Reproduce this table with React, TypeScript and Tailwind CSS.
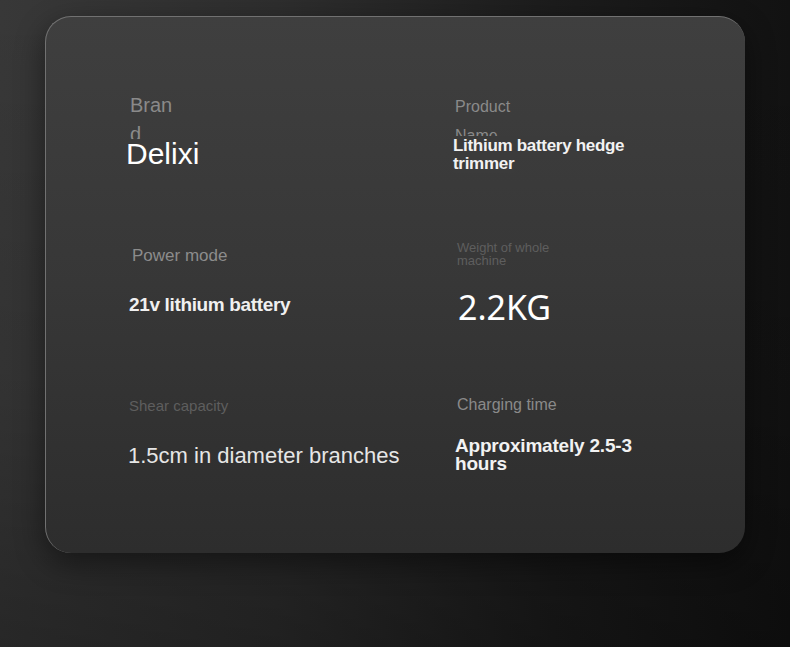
import React from "react";

const sans = { fontFamily: '"Liberation Sans", Arial, sans-serif' };

export default function App() {
  return (
    <div
      className="w-[790px] h-[647px] overflow-hidden pt-[16px] pl-[45px] bg-[linear-gradient(180deg,rgba(0,0,0,0)_0%,rgba(0,0,0,0.1)_60%,rgba(0,0,0,0.3)_100%),linear-gradient(90deg,#383838_0%,#2e2e2e_35%,#1c1c1c_70%,#121212_100%)]"
      style={sans}
    >
      <div className="w-[700px] h-[537px] rounded-[26px] border-t border-l border-[#717171] bg-[linear-gradient(180deg,#3f3f3f_0%,#373737_50%,#2d2d2d_100%)] shadow-[0_10px_30px_rgba(0,0,0,0.45)] pt-[73px] pl-[81px] grid grid-cols-[327px_1fr] grid-rows-[150px_150px_150px]">
        {/* Brand */}
        <div className="pt-[1px]">
          <div className="ml-[3px] w-[46px] break-all text-[20px] leading-[29px] text-[#8a8a8a]">
            Brand
          </div>
          <div className="-mt-[10px] -ml-[1px] relative w-fit bg-[#3b3b3b] text-[30px] leading-[30px] text-white">
            Delixi
          </div>
        </div>
        {/* Product Name */}
        <div className="pt-[2px]">
          <div className="ml-[1px] w-[70px] text-[16px] leading-[29px] text-[#8a8a8a]">
            Product Name
          </div>
          <div className="-mt-[13px] -ml-[1px] relative w-[190px] text-[17px] leading-[18px] font-bold tracking-[-0.3px] text-[#f2f2f2]">
            <span className="bg-[#3b3b3b]">Lithium battery hedge trimmer</span>
          </div>
        </div>
        {/* Power mode */}
        <div className="pt-[6px]">
          <div className="ml-[5px] text-[17px] leading-[20px] text-[#8c8c8c]">
            Power mode
          </div>
          <div className="mt-[28px] ml-[2px] text-[19px] leading-[22px] font-bold tracking-[-0.35px] text-[#f0f0f0]">
            21v lithium battery
          </div>
        </div>
        {/* Weight */}
        <div className="pt-[1px]">
          <div className="ml-[3px] w-[110px] text-[13px] leading-[13px] text-[#5e5e5e]">
            Weight of whole machine
          </div>
          <div
            className="mt-[20px] ml-[4px] text-[34px] leading-[40px] text-white"
            style={{ fontFamily: '"Noto Sans", "Open Sans", sans-serif' }}
          >
            2.2KG
          </div>
        </div>
        {/* Shear capacity */}
        <div className="pt-[7px]">
          <div className="ml-[2px] text-[15px] leading-[18px] text-[#5e5e5e]">
            Shear capacity
          </div>
          <div className="mt-[28px] ml-[1px] text-[22px] leading-[26px] text-[#e6e6e6]">
            1.5cm in diameter branches
          </div>
        </div>
        {/* Charging time */}
        <div className="pt-[6px]">
          <div className="ml-[3px] text-[16px] leading-[18px] text-[#8a8a8a]">
            Charging time
          </div>
          <div className="mt-[23px] ml-[1px] w-[200px] text-[19px] leading-[17.5px] font-bold tracking-[-0.2px] text-[#f2f2f2]">
            Approximately 2.5-3 hours
          </div>
        </div>
      </div>
    </div>
  );
}
